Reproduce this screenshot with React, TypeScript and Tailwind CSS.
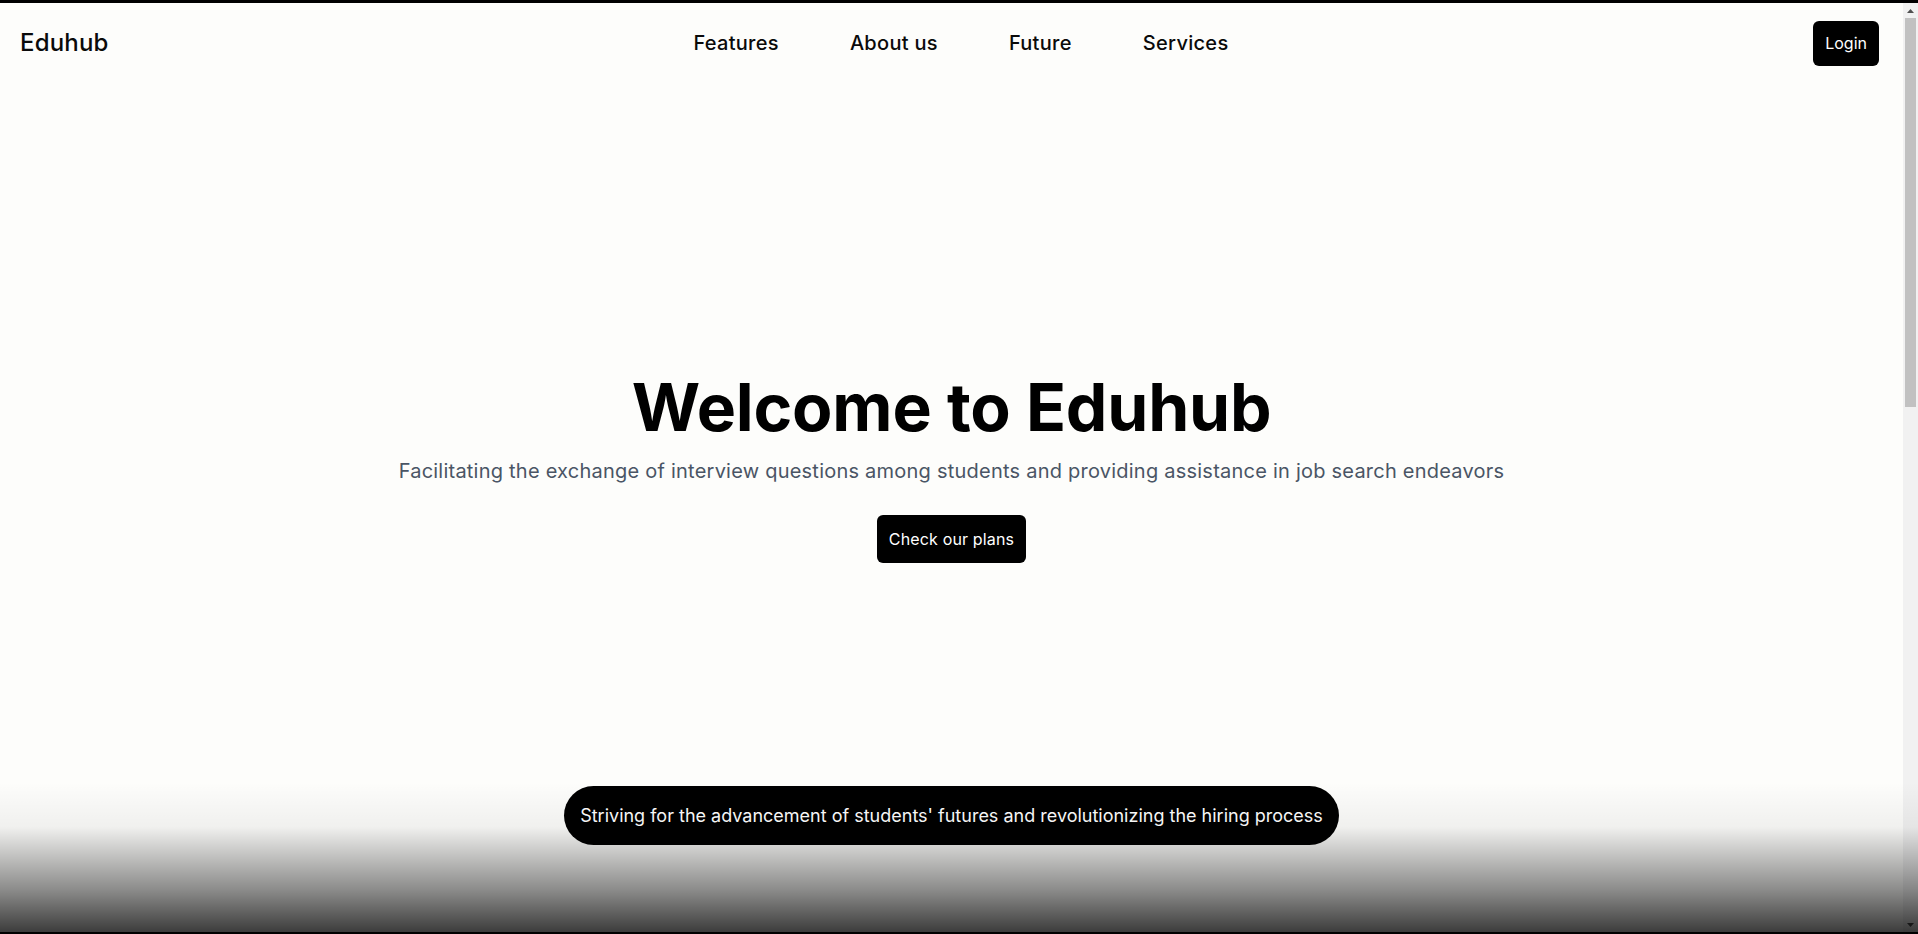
import React from "react";

function ScrollArrow({ up }: { up: boolean }) {
  return (
    <div className="flex h-[15px] w-[15px] items-center justify-center">
      <svg width="7" height="4" viewBox="0 0 7 4">
        {up ? <polygon points="0,4 7,4 3.5,0" fill="#505050" /> : <polygon points="0,0 7,0 3.5,4" fill="#505050" />}
      </svg>
    </div>
  );
}

export default function App() {
  const navItems = ["Features", "About us", "Future", "Services"];
  return (
    <div className="relative h-[934px] w-[1918px] overflow-hidden bg-black font-['Inter',sans-serif]">
      <div className="flex h-full flex-col pt-[3px] pb-[2px]">
        <div className="flex min-h-0 flex-1">
          <main className="flex flex-1 flex-col bg-[#fdfdfb]">
            <header className="flex h-[80px] items-center justify-between pl-5 pr-6">
              <span className="text-2xl font-medium tracking-[0.2px] text-[#0a0a0a]">Eduhub</span>
              <nav className="flex items-center gap-[71px] text-xl font-medium tracking-[0.3px] text-[#0a0a0a]">
                {navItems.map((n) => (
                  <a key={n} className="cursor-pointer">
                    {n}
                  </a>
                ))}
              </nav>
              <button className="flex h-[45px] items-center rounded-md bg-black px-3 text-base text-white">
                Login
              </button>
            </header>
            <section className="flex flex-col items-center pt-[291px]">
              <h1 className="text-[66px] font-bold leading-none tracking-[-0.2px] text-black">Welcome to Eduhub</h1>
              <p className="mt-[17px] text-xl tracking-[0.23px] text-gray-600">
                Facilitating the exchange of interview questions among students and providing assistance in job search endeavors
              </p>
              <button className="mt-[30px] flex h-[48px] items-center rounded-md bg-black px-3 text-base tracking-[0.15px] text-white">
                Check our plans
              </button>
            </section>
            <div className="mt-auto flex justify-center pb-[87px]">
              <div className="flex h-[59px] items-center rounded-full bg-black px-4 text-lg text-white">
                Striving for the advancement of students' futures and revolutionizing the hiring process
              </div>
            </div>
          </main>
          <div className="flex w-[15px] flex-col bg-[#f1f1f1]">
            <ScrollArrow up />
            <div className="flex h-[389px] justify-center px-[2px]">
              <div className="w-full bg-[#c1c1c1]" />
            </div>
            <div className="flex-1" />
            <ScrollArrow up={false} />
          </div>
        </div>
      </div>
      <div className="pointer-events-none absolute inset-x-0 bottom-[2px] h-[150px] bg-[linear-gradient(to_bottom,rgba(0,0,0,0)_0%,rgba(0,0,0,0.05)_30%,rgba(0,0,0,0.45)_72%,rgba(0,0,0,0.76)_100%)]" />
    </div>
  );
}
